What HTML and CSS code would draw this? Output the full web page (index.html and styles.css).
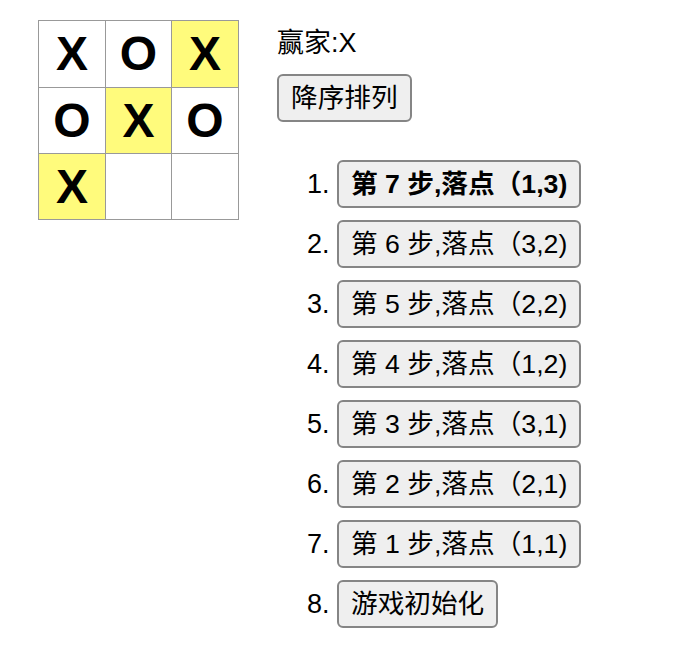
FILE: index.html
```html
<!DOCTYPE html>
<html lang="zh">
<head>
<meta charset="utf-8">
<title>井字棋</title>
<link rel="stylesheet" href="styles.css">
</head>
<body>
<div class="game">
  <div class="board">
    <button class="square">X</button>
    <button class="square">O</button>
    <button class="square win">X</button>
    <button class="square">O</button>
    <button class="square win">X</button>
    <button class="square">O</button>
    <button class="square win">X</button>
    <button class="square"></button>
    <button class="square"></button>
  </div>
  <div class="info">
    <div class="status">赢家:X</div>
    <button class="btn">降序排列</button>
    <ol class="moves">
      <li><button class="btn current">第 7 步,落点（1,3)</button></li>
      <li><button class="btn">第 6 步,落点（3,2)</button></li>
      <li><button class="btn">第 5 步,落点（2,2)</button></li>
      <li><button class="btn">第 4 步,落点（1,2)</button></li>
      <li><button class="btn">第 3 步,落点（3,1)</button></li>
      <li><button class="btn">第 2 步,落点（2,1)</button></li>
      <li><button class="btn">第 1 步,落点（1,1)</button></li>
      <li><button class="btn">游戏初始化</button></li>
    </ol>
  </div>
</div>
</body>
</html>
```
FILE: styles.css
```css
html, body {
  margin: 0;
  padding: 0;
  background: #ffffff;
}
body {
  font-family: "Liberation Sans", "Noto Sans CJK SC", sans-serif;
  font-size: 28px;
  color: #000;
}
.game {
  display: flex;
  align-items: flex-start;
  padding: 20px 0 0 38px;
}
.board {
  display: grid;
  grid-template-columns: 67px 66px 67px;
  grid-template-rows: 67px 66px 66px;
  border-top: 1px solid #999;
  border-left: 1px solid #999;
}
.square {
  margin: 0;
  padding: 0;
  background: #fff;
  border: none;
  border-right: 1px solid #999;
  border-bottom: 1px solid #999;
  font-family: "Liberation Sans", sans-serif;
  font-size: 48px;
  font-weight: bold;
  color: #000;
  line-height: 1;
  text-align: center;
}
.square.win {
  background: #fffb7c;
}
.info {
  margin-left: 38px;
  display: flex;
  flex-direction: column;
  align-items: flex-start;
}
.status {
  font-size: 27px;
  line-height: 34px;
  margin-top: 6px;
}
.btn {
  font-family: "Liberation Sans", "Noto Sans CJK SC", sans-serif;
  font-size: 26.67px;
  line-height: 40px;
  padding: 2px 12px;
  border: 2px solid #858585;
  border-radius: 6px;
  background: #efefef;
  color: #000;
  margin: 0;
}
.status + .btn {
  margin-top: 14px;
}
.btn.current {
  font-weight: bold;
}
.moves {
  margin: 38px 0 0 0;
  padding-left: 60px;
}
.moves li {
  height: 48px;
  line-height: 48px;
  margin-bottom: 12px;
  font-size: 28px;
}
.moves li::marker {
  font-size: 27px;
}
.moves li .btn {
  vertical-align: baseline;
}
```
